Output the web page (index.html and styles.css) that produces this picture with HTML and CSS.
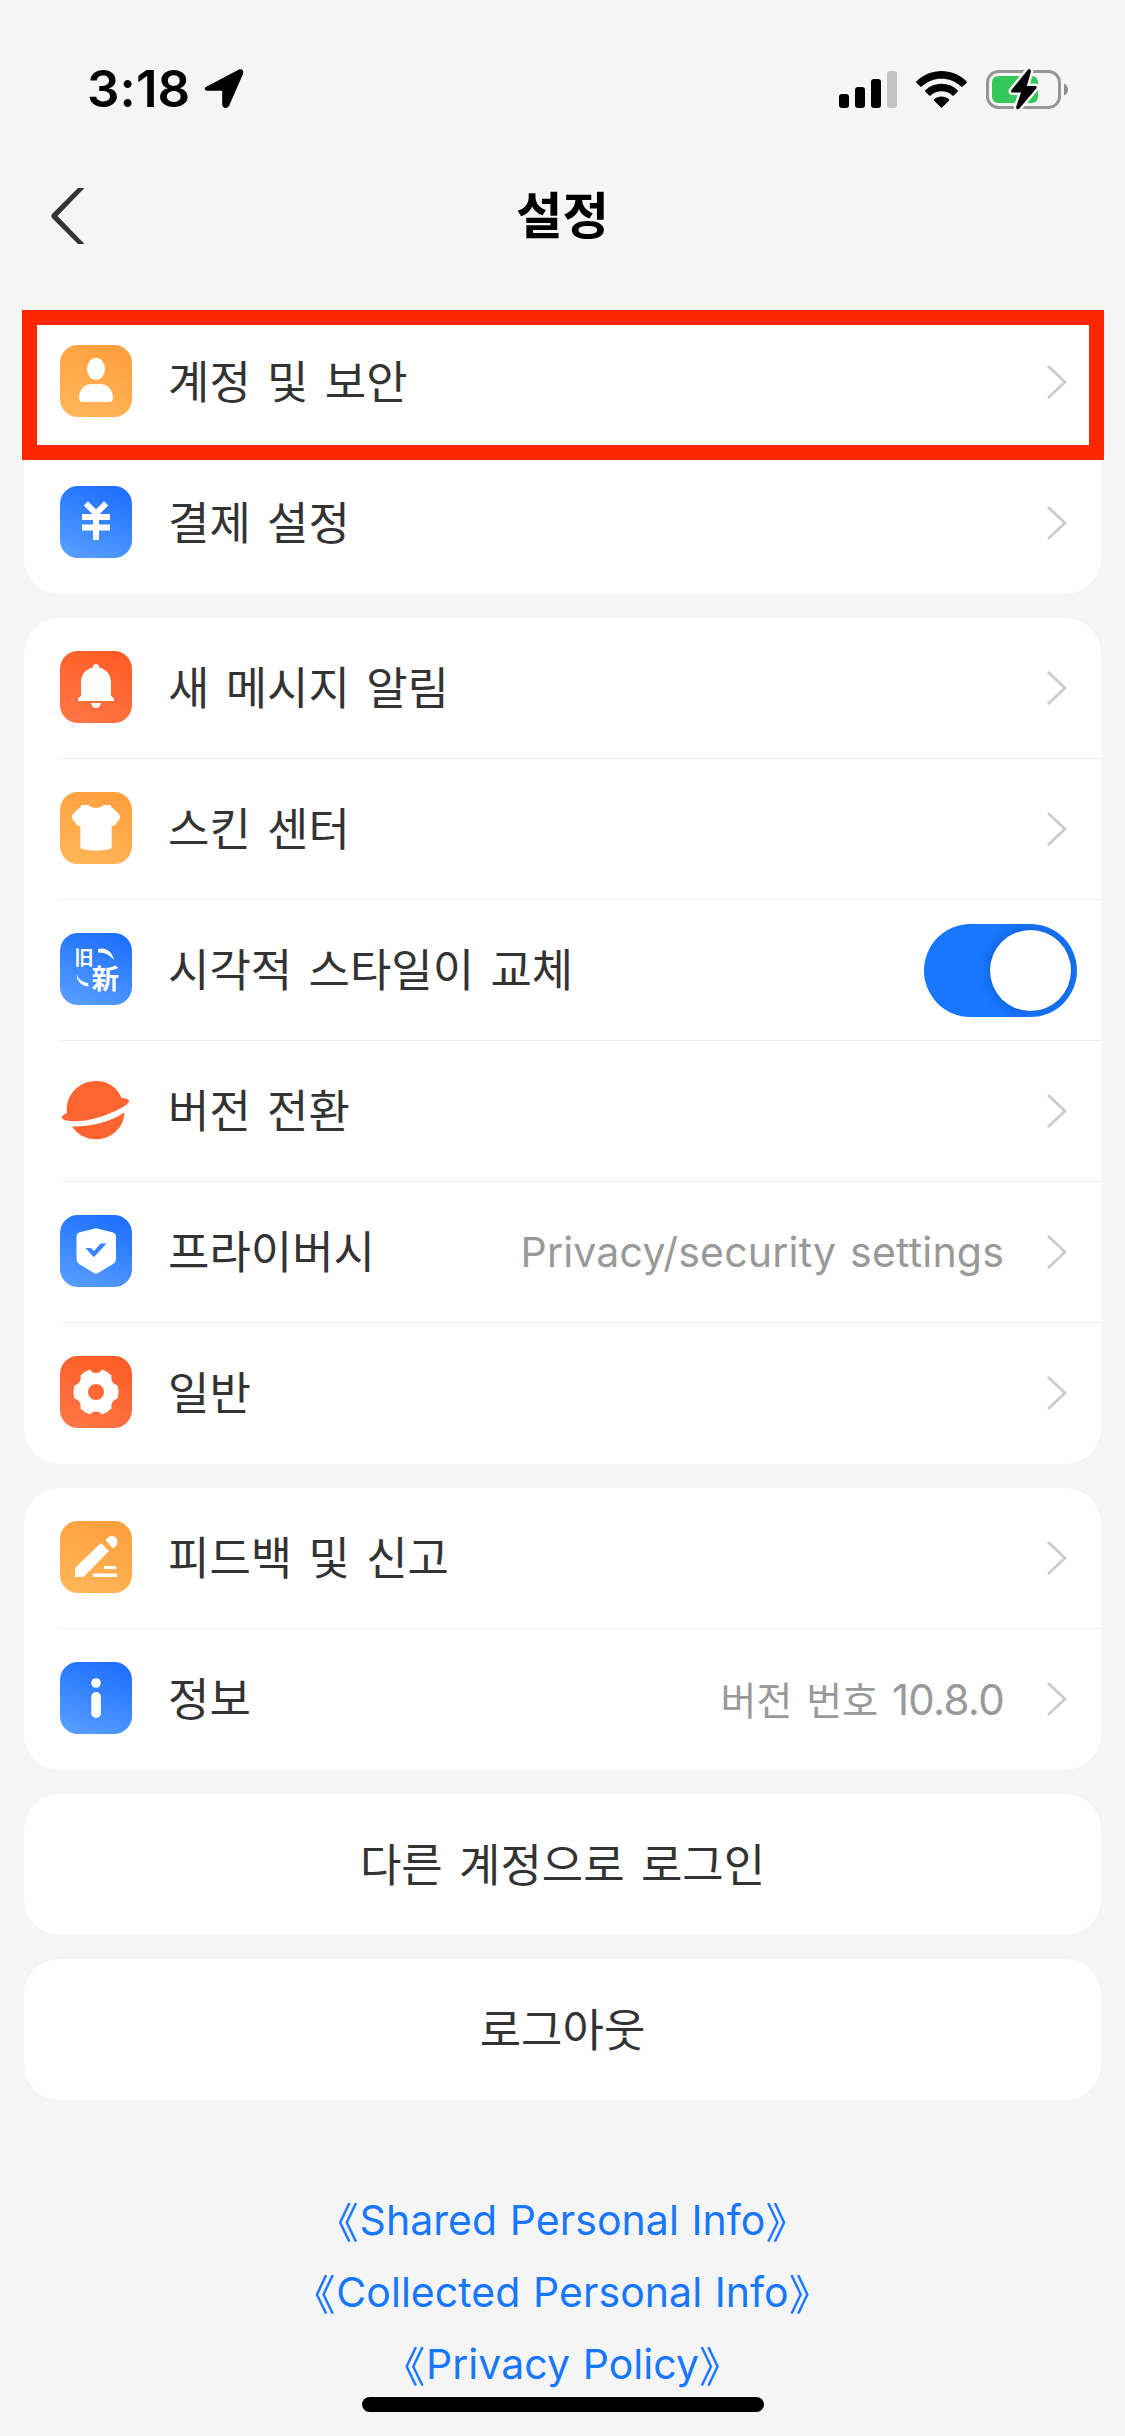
FILE: index.html
```html
<!DOCTYPE html>
<html lang="ko">
<head>
<meta charset="utf-8">
<title>설정</title>
<link rel="stylesheet" href="styles.css">
</head>
<body>
<svg class="defs" aria-hidden="true">
  <defs>
    <symbol id="chevron" viewBox="0 0 20 34"><path d="M1 1 18 17 1 33" fill="none" stroke="#ccc" stroke-width="2.8"/></symbol>
  </defs>
</svg>
<div class="screen">
  <header class="status">
    <div class="status-left">
      <span class="time">3:18</span>
      <svg class="location" width="40" height="40" viewBox="0 0 40 40"><path d="M3.2 17.2 34.5 .8C37.700-.8 40.200 1.600 39 5L25.200 36.600C24 40.200 18.200 39.700 18.200 35.500V21.700H4.500C-.2 21.700-.5 19 3.200 17.200Z"/></svg>
    </div>
    <div class="status-right">
      <svg width="58" height="37" viewBox="0 0 58 37"><rect y="23" width="10" height="14" rx="3"/><rect x="16" y="16" width="10" height="21" rx="3"/><rect x="32" y="8" width="10" height="29" rx="3"/><rect x="48" width="10" height="37" rx="3" fill="#c4c4c4"/></svg>
      <svg class="wifi" width="51" height="37" viewBox="0 0 51 37"><path d="M.6 10.300C14.500-3.400 36.500-3.400 50.400 10.300 51 10.900 51 11.300 50.500 11.900L46.700 15.500C46.200 16 45.700 16 45.200 15.500 34.300 5 16.700 5 5.800 15.500 5.300 16 4.800 16 4.300 15.500L.5 11.900C0 11.300 0 10.900.6 10.300ZM9.400 19.200C18.300 10.700 32.700 10.700 41.600 19.200 42.100 19.700 42.100 20.200 41.600 20.700L37.800 24.400C37.300 24.900 36.800 24.900 36.300 24.400 30.300 19 20.700 19 14.700 24.400 14.200 24.900 13.700 24.900 13.200 24.400L9.400 20.700C8.900 20.200 8.900 19.700 9.400 19.200ZM18.200 28.200C22.200 24.600 28.800 24.600 32.800 28.200 33.400 28.700 33.300 29.200 32.900 29.700L26.300 36.300C25.800 36.900 25.200 36.900 24.700 36.300L18.100 29.700C17.700 29.200 17.600 28.700 18.200 28.200Z"/></svg>
      <svg width="83" height="41" viewBox="0 0 83 41"><rect x="1.500" y="2.500" width="72" height="36" rx="11" fill="none" stroke="#969696" stroke-width="3"/><rect x="6" y="7" width="46" height="27" rx="6" fill="#34c759"/><path d="M78 14.500C83.300 16.500 83.300 24.500 78 26.500Z" fill="#8c8c8c"/><path d="M41.500 1.200 25.500 21C24.500 22.400 25 23.600 26.600 23.600H35L30.300 37.500C29.500 40.500 32 41.200 33.800 39L50.200 19.500C51.200 18.200 50.700 17 49 17H40.800L44.700 3.600C45.500.2 43.500-1 41.500 1.200Z" stroke="#f5f5f5" stroke-width="5" paint-order="stroke"/></svg>
    </div>
  </header>
  <nav class="nav">
    <svg class="back" width="34" height="56" viewBox="0 0 34 56"><path d="M33.500 0H27L1 26Q-.5 28 1 30L27 56H33.500L6.500 28Z" fill="#333"/></svg>
    <h1 class="title">설정</h1>
  </nav>
  <main class="content">
    <section class="card">
      <div class="row highlighted">
        <span class="icon orange"><svg viewBox="0 0 72 72"><ellipse cx="36" cy="24" rx="9" ry="11"/><path d="M19 53C19 45 24.500 39 32 39H40C47.500 39 53 45 53 53Q53 57 49 57H23Q19 57 19 53Z"/></svg></span>
        <span class="label">계정 및 보안</span><svg class="chevron"><use href="#chevron"/></svg>
      </div>
      <div class="row">
        <span class="icon blue"><svg viewBox="0 0 72 72"><path d="M28 19.500 36 27.500 44 19.500M36 27V51M25 31H47M25 41.500H47" fill="none" stroke="#fff" stroke-width="6" stroke-linecap="square" stroke-linejoin="round"/></svg></span>
        <span class="label">결제 설정</span><svg class="chevron"><use href="#chevron"/></svg>
      </div>
    </section>
    <section class="card">
      <div class="row">
        <span class="icon red"><svg viewBox="0 0 72 72"><path d="M32.500 16.500Q33.500 13 36 13T39.500 16.500C47 18.500 51 24 51 32V44.500Q51.500 45.500 53 46.500 54.500 48 54 50H18Q17.500 48 19 46.500 20.500 45.500 21 44.500V32C21 24 25 18.500 32.500 16.500ZM31 52H41Q40 57 36 57T31 52Z"/></svg></span>
        <span class="label">새 메시지 알림</span><svg class="chevron"><use href="#chevron"/></svg>
      </div>
      <div class="row">
        <span class="icon orange"><svg viewBox="0 0 72 72"><path d="M22 13H28.500C32 17 40 17 43.500 13H50L59 22Q61 25 59 28L55 33Q54 34.300 51.700 34V55Q51.700 56.500 50 57Q36 60.500 22 57 20.300 56.500 20.300 55V34Q18 34.300 17 33L13 28Q11 25 13 22Z"/></svg></span>
        <span class="label">스킨 센터</span><svg class="chevron"><use href="#chevron"/></svg>
      </div>
      <div class="row toggle-row">
        <span class="icon blue"><svg viewBox="0 0 72 72"><text class="glyph" x="14.500" y="32" font-size="19">旧</text><text class="glyph new" x="31.500" y="56" font-size="27.500">新</text><path d="M38 16C45 14 52 18 54 27 50 22 45 19 38 19.500ZM17 41C18 46 22 49 28 50L28.500 53.500C21 53 16 47 17 41Z"/></svg></span>
        <span class="label">시각적 스타일이 교체</span><span class="toggle"><span class="knob"></span></span>
      </div>
      <div class="row">
        <span class="icon"><svg viewBox="0 0 72 72" fill="#ff6530"><path d="M7 39C5 22 18 7 36 7 48 7 57 13 61.500 24Q69 24 69 27.500C68 31 60 35 48 40 34 46 18 48.500 6 46.500 0 45 .5 42 7 39ZM12 52.500C30 53 50 48 64.500 38.500 64 54 51 65.300 36 65.300 26 65.300 17 60.500 12 52.500Z"/></svg></span>
        <span class="label">버전 전환</span><svg class="chevron"><use href="#chevron"/></svg>
      </div>
      <div class="row">
        <span class="icon blue"><svg viewBox="0 0 72 72"><path d="M35 13.500Q36 13 37 13.500L53 17.500Q56 18.500 56 22V44Q56 47 53 49L38 58Q36 59.300 34 58L19 49Q16.500 47 16.500 44V22Q16.500 18.500 19 17.500Z"/><path d="M25.500 33H31L34 36 40.500 28.500H46.500L34.500 41.500Q33.800 42.200 33 41.500Z" fill="#3b84ff"/></svg></span>
        <span class="label">프라이버시</span><span class="value latin privacy">Privacy/security settings</span><svg class="chevron"><use href="#chevron"/></svg>
      </div>
      <div class="row">
        <span class="icon red"><svg viewBox="0 0 72 72"><path fill-rule="evenodd" d="M30 13.500Q32 17 36 17T42 13.500Q47 15 51.500 19.500 50 27 57.500 29.500 59.500 36 57.500 42.500 50 45 51.500 52.500 47 57 42 58.500 40 55.500 36 55.500T30 58.500Q25 57 20.500 52.500 22 45 14.500 42.500 12.500 36 14.500 29.500 22 27 20.500 19.500 25 15 30 13.500ZM36 28A8 8 0 1 0 36 44 8 8 0 1 0 36 28Z"/></svg></span>
        <span class="label">일반</span><svg class="chevron"><use href="#chevron"/></svg>
      </div>
    </section>
    <section class="card">
      <div class="row">
        <span class="icon orange"><svg viewBox="0 0 72 72"><path d="M41 22 49 30 24.500 55Q23.500 56 22 56H16Q15 56 15 55V49Q15 47 16.500 45.500ZM45.500 19 48 16.500C54 12 60 19 56.500 24.500L53 27.500Z"/><path d="M44 45H56V48H44ZM33 52.500H57V56H33Z"/></svg></span>
        <span class="label">피드백 및 신고</span><svg class="chevron"><use href="#chevron"/></svg>
      </div>
      <div class="row">
        <span class="icon blue"><svg viewBox="0 0 72 72"><circle cx="36" cy="21" r="4.800"/><rect x="31.300" y="30" width="9.600" height="26" rx="4.800"/></svg></span>
        <span class="label">정보</span><span class="value version">버전 번호 <span class="latin number">10.8.0</span></span><svg class="chevron"><use href="#chevron"/></svg>
      </div>
    </section>
    <button class="card action">다른 계정으로 로그인</button>
    <button class="card action">로그아웃</button>
    <div class="links latin">
      <a><i>《</i><span>Shared Personal Info</span><i>》</i></a>
      <a><i>《</i><span>Collected Personal Info</span><i>》</i></a>
      <a><i>《</i><span>Privacy Policy</span><i>》</i></a>
    </div>
  </main>
  <div class="home"></div>
</div>
</body>
</html>
```
FILE: styles.css
```css
*, *::after { box-sizing: border-box; }
body { margin: 0; background: #f5f5f5; color: #333; font-family: "Noto Sans CJK KR", sans-serif; }
svg { display: block; flex: none; overflow: visible; }
.defs { position: absolute; width: 0; height: 0; }
.screen { position: relative; width: 1125px; height: 2436px; overflow: hidden; }
.latin { font-family: Inter, "Noto Sans CJK SC", sans-serif; }

.status { display: flex; justify-content: space-between; align-items: center; height: 150px; padding: 28px 56px 0 87px; }
.status-left, .status-right { display: flex; align-items: center; }
.time { width: 117px; color: #000; font: 600 51px/60px Inter, sans-serif; letter-spacing: .1px; white-space: nowrap; }
.wifi { margin: 0 19px; }

.nav { display: grid; grid-template-columns: 1fr auto 1fr; align-items: center; height: 132px; padding: 0 51px; }
.title { margin: -8px 0 0; color: #000; font-size: 50.500px; font-weight: 700; line-height: 72px; }

.content { display: flex; flex-direction: column; gap: 24px; padding: 30px 24px 0; }
.card { border: 0; border-radius: 36px; background: #fff; }
.row { position: relative; display: flex; align-items: center; height: 141px; margin-left: 36px; padding-right: 34px; border-bottom: 1px solid #eee; }
.row:last-child { border-bottom-color: transparent; }
.toggle-row { padding-right: 24px; }
.highlighted { border-bottom-color: transparent; }
.highlighted::after { content: ""; position: absolute; left: -38px; right: -3px; top: -2px; height: 150px; border: 15px solid #ff2600; z-index: 1; }
.icon { flex: none; width: 72px; height: 72px; margin: -2px 36px 0 0; border-radius: 18px; fill: #fff; }
.icon svg { width: 72px; height: 72px; }
.orange { background: linear-gradient(200deg, #ff9e3c, #ffb75a); }
.blue { background: linear-gradient(200deg, #1f70ff 10%, #5ba1ff); }
.red { background: linear-gradient(200deg, #ff5a22, #ff7848); }
.glyph { font-family: "Noto Sans CJK SC", sans-serif; font-weight: 700; }
.label { flex: 1; margin-top: -4px; font-size: 45px; line-height: 66px; word-spacing: 3.700px; white-space: nowrap; }
.value { margin-right: 43px; color: #999; font-size: 41px; line-height: 60px; white-space: nowrap; }
.privacy { letter-spacing: .2px; word-spacing: 2px; }
.version { font-size: 39px; word-spacing: 3px; }
.number { font-size: 42px; letter-spacing: -.7px; }
.chevron { width: 20px; height: 34px; }
.toggle { flex: none; width: 153px; height: 93px; padding: 6px; border-radius: 47px; background: #1777ff; overflow: hidden; }
.knob { display: block; width: 81px; height: 81px; margin-left: auto; border-radius: 50%; background: #fff; box-shadow: 0 0 14px rgba(0, 0, 0, .25); }

.action { height: 141px; padding: 0 0 4px; color: #333; font: 400 45px/66px "Noto Sans CJK KR", sans-serif; word-spacing: 3.700px; }
.links { display: flex; flex-direction: column; align-items: center; padding-top: 60px; color: #1777ff; font-size: 41px; line-height: 72px; letter-spacing: .05px; word-spacing: 1px; white-space: nowrap; }
.links a { display: flex; }
.links i { width: 22px; font-style: normal; font-family: "Noto Sans CJK SC", sans-serif; font-size: 42px; font-feature-settings: "halt"; }
.home { position: absolute; left: 362px; top: 2397px; width: 402px; height: 15px; border-radius: 8px; background: #000; }
```
